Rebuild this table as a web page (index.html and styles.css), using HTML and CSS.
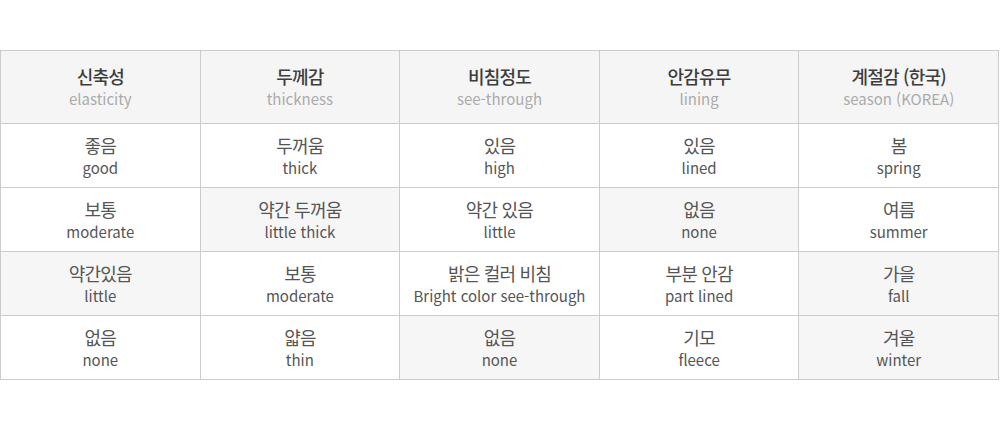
FILE: index.html
```html
<!DOCTYPE html>
<html lang="ko">
<head>
<meta charset="utf-8">
<link rel="stylesheet" href="styles.css">
</head>
<body>
<table class="size-table">
  <thead>
    <tr>
      <th><span class="ko">신축성</span><span class="en">elasticity</span></th>
      <th><span class="ko">두께감</span><span class="en">thickness</span></th>
      <th><span class="ko">비침정도</span><span class="en">see-through</span></th>
      <th><span class="ko">안감유무</span><span class="en">lining</span></th>
      <th><span class="ko">계절감 (한국)</span><span class="en">season (KOREA)</span></th>
    </tr>
  </thead>
  <tbody>
    <tr>
      <td><span class="ko">좋음</span><span class="en">good</span></td>
      <td><span class="ko">두꺼움</span><span class="en">thick</span></td>
      <td><span class="ko">있음</span><span class="en">high</span></td>
      <td><span class="ko">있음</span><span class="en">lined</span></td>
      <td><span class="ko">봄</span><span class="en">spring</span></td>
    </tr>
    <tr>
      <td><span class="ko">보통</span><span class="en">moderate</span></td>
      <td class="on"><span class="ko">약간 두꺼움</span><span class="en">little thick</span></td>
      <td><span class="ko">약간 있음</span><span class="en">little</span></td>
      <td class="on"><span class="ko">없음</span><span class="en">none</span></td>
      <td><span class="ko">여름</span><span class="en">summer</span></td>
    </tr>
    <tr>
      <td class="on"><span class="ko">약간있음</span><span class="en">little</span></td>
      <td><span class="ko">보통</span><span class="en">moderate</span></td>
      <td><span class="ko">밝은 컬러 비침</span><span class="en">Bright color see-through</span></td>
      <td><span class="ko">부분 안감</span><span class="en">part lined</span></td>
      <td class="on"><span class="ko">가을</span><span class="en">fall</span></td>
    </tr>
    <tr>
      <td><span class="ko">없음</span><span class="en">none</span></td>
      <td><span class="ko">얇음</span><span class="en">thin</span></td>
      <td class="on"><span class="ko">없음</span><span class="en">none</span></td>
      <td><span class="ko">기모</span><span class="en">fleece</span></td>
      <td class="on"><span class="ko">겨울</span><span class="en">winter</span></td>
    </tr>
  </tbody>
</table>
</body>
</html>
```

FILE: styles.css
```css
html, body {
  margin: 0;
  padding: 0;
  background: #fff;
}
body {
  padding-top: 50px;
  font-family: "Noto Sans CJK KR", "Noto Sans", sans-serif;
}
.size-table {
  width: 999px;
  border-collapse: collapse;
  table-layout: fixed;
}
.size-table th,
.size-table td {
  border: 1px solid #cccccc;
  text-align: center;
  vertical-align: middle;
  padding: 0;
}
.size-table th {
  height: 72px;
  background: #f5f5f5;
}
.size-table td {
  height: 63px;
  background: #fff;
}
.size-table td.on {
  background: #f6f6f6;
}
.ko, .en {
  display: block;
}
.ko {
  font-size: 18px;
  letter-spacing: -0.8px;
  line-height: 24px;
}
.en {
  font-size: 15px;
  line-height: 22px;
}
.size-table th .ko {
  font-weight: 500;
  color: #3d3d3d;
}
.size-table th .en {
  font-weight: 400;
  color: #ababab;
}
.size-table td .ko {
  font-weight: 400;
  color: #555;
}
.size-table td .en {
  color: #555;
}
```
